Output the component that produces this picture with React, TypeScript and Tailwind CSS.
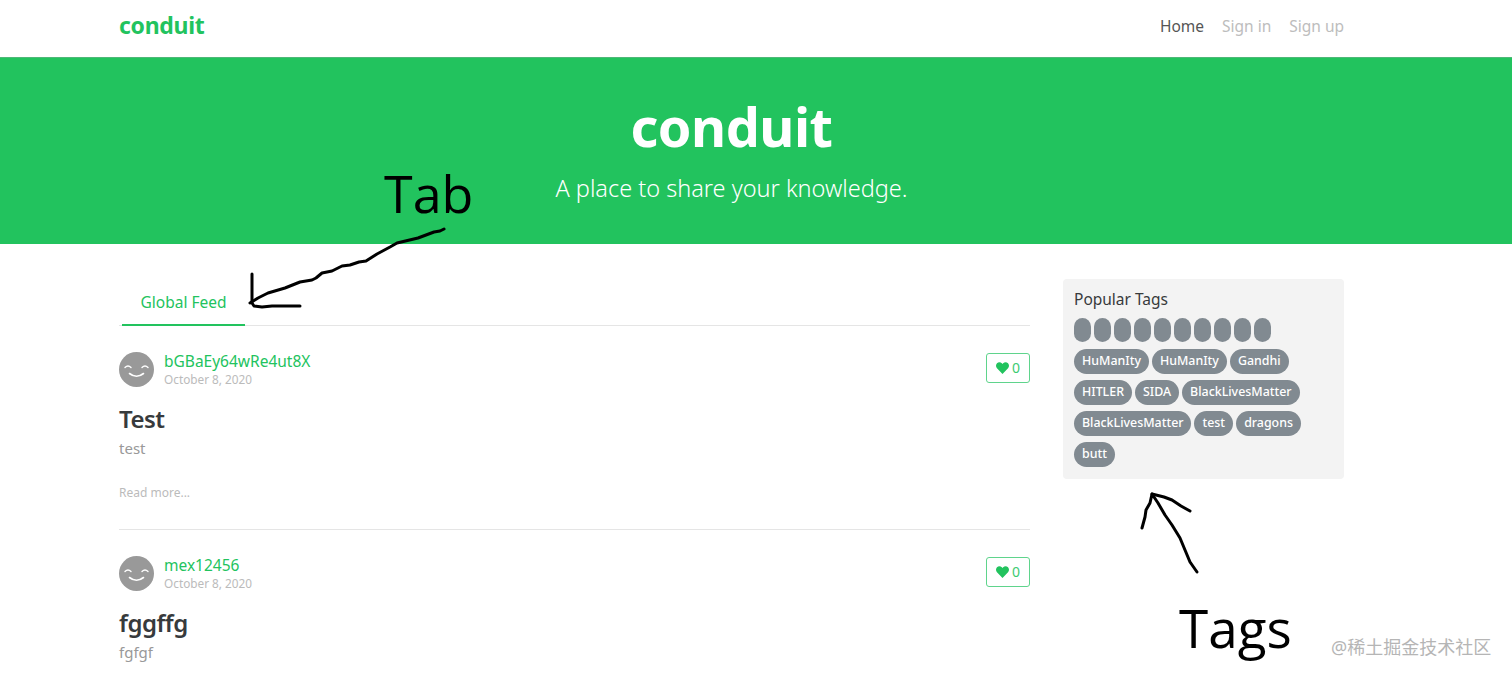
const sans = "font-['Noto_Sans','Open_Sans',sans-serif]";

const row1 = ["HuManIty", "HuManIty", "Gandhi"];
const row2 = ["HITLER", "SIDA", "BlackLivesMatter"];
const row3 = ["BlackLivesMatter", "test", "dragons"];

function Avatar() {
  return (
    <svg width="35" height="35" viewBox="0 0 35 35" className="shrink-0">
      <circle cx="17.5" cy="17.5" r="17.5" fill="#999999" />
      <path d="M6 15.5q3-3 6 0M23 15.5q3-3 6 0" stroke="#fff" strokeWidth="1.4" fill="none" strokeLinecap="round" />
      <path d="M10.5 21.5q7 5.5 14 0" stroke="#fff" strokeWidth="1.6" fill="none" strokeLinecap="round" />
    </svg>
  );
}

function LikeButton() {
  return (
    <button type="button" className="w-[44px] h-[30px] flex items-center justify-center gap-[3px] border border-[#5fd48c] rounded-[3px] text-[#3ccb72] text-[14px] leading-none">
      <svg width="13" height="12" viewBox="0 0 24 22" fill="#22c35e">
        <path d="M12 22 1.8 11.6C-.6 9-.6 5 1.8 2.4c2.5-2.6 6.5-2.6 9 0L12 3.700l1.200-1.300c2.500-2.600 6.500-2.600 9 0 2.400 2.600 2.400 6.600 0 9.200z" />
      </svg>
      0
    </button>
  );
}

function Preview({ author, title, body, last }: { author: string; title: string; body: string; last?: boolean }) {
  return (
    <div className={last ? "pt-[27px]" : "pt-[27px] pb-[28px] border-b border-[#e5e5e5]"}>
      <div className="flex items-start justify-between">
        <div className="flex items-center gap-[10px] mt-[-1px]">
          <Avatar />
          <div className="flex flex-col">
            <span className="text-[#22c35e] text-[15.500px] leading-[18px]">{author}</span>
            <span className="mt-[1px] text-[#bbbbbb] text-[11.800px] leading-[16px]">October 8, 2020</span>
          </div>
        </div>
        <LikeButton />
      </div>
      <h2 className="mt-[17px] text-[#373a3c] text-[24px] leading-[30px] font-semibold tracking-[-0.5px]">{title}</h2>
      <p className="mt-[3px] text-[#999999] text-[15px] leading-[22px]">{body}</p>
      {!last && <div className="mt-[26px] text-[#bbbbbb] text-[12px] leading-[16px]">Read more...</div>}
    </div>
  );
}

function Tag({ label }: { label: string }) {
  return (
    <span className="h-[25px] px-[8px] flex items-center rounded-full bg-[#818a91] text-white text-[12.400px] font-medium leading-none">
      {label}
    </span>
  );
}

export default function App() {
  return (
    <div className={`${sans} relative h-[678px] overflow-hidden bg-white`}>
      <nav className="h-[58px] bg-white border-b border-[#4fb878] shadow-sm">
        <div className="mx-[119px] w-[1225px] h-full flex items-center justify-between pb-[6px]">
          <span className="text-[#22c35e] text-[23px] font-bold leading-none tracking-[-0.3px]">conduit</span>
          <div className="flex items-center gap-[18px] text-[15.500px] text-[#bdbdbd] mt-[3px]">
            <a className="text-[#555555]">Home</a>
            <a>Sign in</a>
            <a>Sign up</a>
          </div>
        </div>
      </nav>

      <header className="h-[186px] bg-[#22c35e] flex flex-col items-center pr-[49px] text-white">
        <h1 className="mt-[33px] text-[54px] font-bold leading-[70px] tracking-[-0.5px]">conduit</h1>
        <p className="mt-[12px] text-[23.500px] leading-[30px] font-light">A place to share your knowledge.</p>
      </header>

      <main className="mx-[119px] w-[1225px] flex items-start justify-between">
        <section className="w-[911px] pt-[35px]">
          <div className="h-[47px] border-b border-[#e5e5e5] pl-[3px]">
            <div className="w-[123px] h-[47px] border-b-2 border-[#22c35e] flex items-center justify-center pt-[2px] text-[#22c35e] text-[15.500px]">
              Global Feed
            </div>
          </div>
          <Preview author="bGBaEy64wRe4ut8X" title="Test" body="test" />
          <Preview author="mex12456" title="fggffg" body="fgfgf" last />
        </section>

        <aside className="w-[281px] h-[200px] mt-[35px] bg-[#f3f3f3] rounded-[4px] px-[11px] pt-[9px]">
          <p className="text-[#373a3c] text-[15.500px] leading-[22px]">Popular Tags</p>
          <div className="mt-[8px] flex gap-[3px]">
            {[0, 1, 2, 3, 4, 5, 6, 7, 8, 9].map((i) => (
              <span key={i} className="w-[17px] h-[24px] rounded-[9px] bg-[#818a91]" />
            ))}
          </div>
          <div className="mt-[7px] flex flex-col gap-[6px]">
            <div className="flex gap-[3px]">{row1.map((t, i) => <Tag key={i} label={t} />)}</div>
            <div className="flex gap-[3px]">{row2.map((t, i) => <Tag key={i} label={t} />)}</div>
            <div className="flex gap-[3px]">{row3.map((t, i) => <Tag key={i} label={t} />)}</div>
            <div className="flex gap-[3px]"><Tag label="butt" /></div>
          </div>
        </aside>
      </main>

      {/* hand drawn annotations over the page */}
      <svg width="1512" height="678" viewBox="0 0 1512 678" fill="none" stroke="#000" strokeWidth="3" strokeLinecap="round" strokeLinejoin="round" className="absolute inset-0 pointer-events-none">
        <path d="M444 229 L440 231 L434 232 L418 238 L397 243 L390 247 L377 254 L366 261 L359 262 L350 265 L342 266 L332 271 L322 273 L316 278 L312 280 L300 282 L285 288 L268 293 L258 298 L250 303" />
        <path d="M252 274 L252 303 L254 306 L262 307 L272 306 L300 306" />
        <path d="M1197 572 L1190 562 L1180 538 L1172 525 L1165 515 L1158 503 L1152 494 L1150 503 L1146 510 L1145 517 L1142 528" />
        <path d="M1152 494 L1164 497 L1172 500 L1181 506 L1190 511" />
      </svg>
      <span className="absolute left-[384px] top-[160px] font-['Open_Sans',sans-serif] text-[52px] leading-[66px] text-black">Tab</span>
      <span className="absolute left-[1179px] top-[595px] font-['Open_Sans',sans-serif] text-[53px] leading-[66px] text-black">Tags</span>
      <span className="absolute left-[1331px] top-[636px] font-['Noto_Sans','Noto_Sans_CJK_SC',sans-serif] text-[18px] leading-[22px] text-[#b5b5b5]">@稀土掘金技术社区</span>
    </div>
  );
}
